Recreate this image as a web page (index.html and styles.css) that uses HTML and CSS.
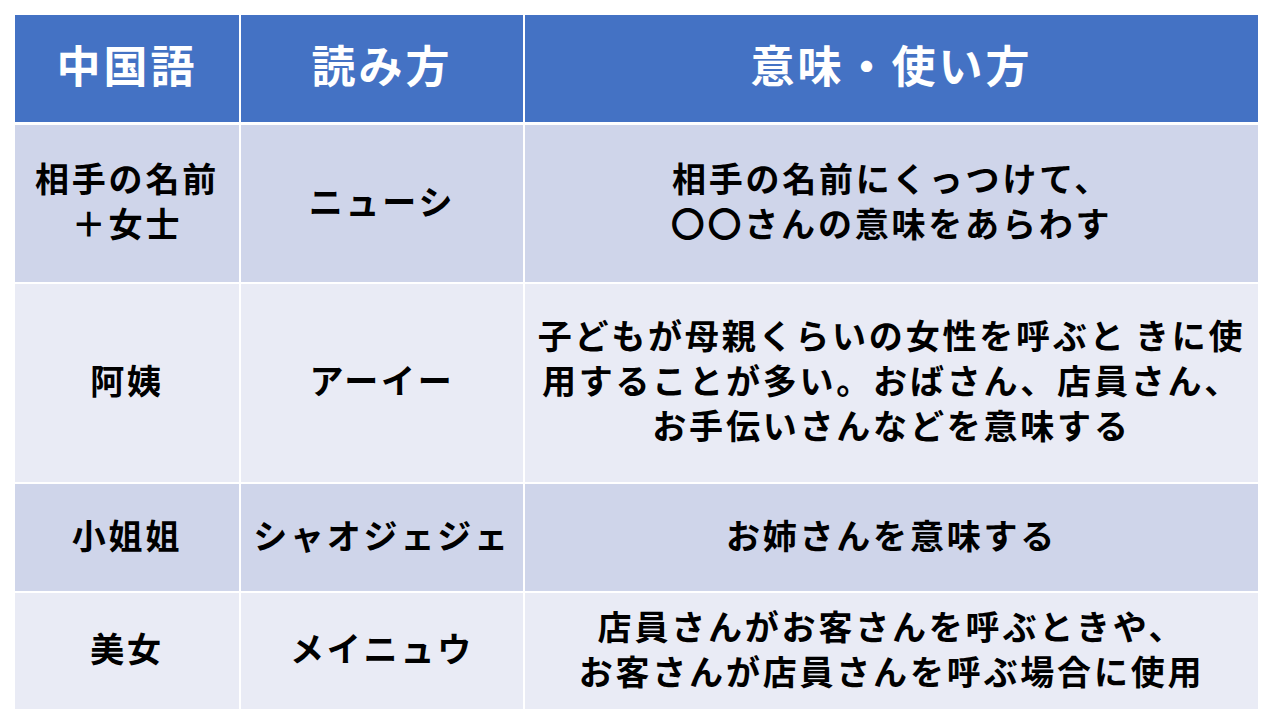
FILE: index.html
```html
<!DOCTYPE html>
<html lang="ja">
<head>
<meta charset="utf-8">
<title>中国語 呼び方</title>
<link rel="stylesheet" href="styles.css">
</head>
<body>
<div class="page">
  <div class="table">
    <div class="row head">
      <div class="cell">中国語</div>
      <div class="cell">読み方</div>
      <div class="cell">意味・使い方</div>
    </div>
    <div class="row odd r1">
      <div class="cell">相手の名前<br>＋女士</div>
      <div class="cell">ニューシ</div>
      <div class="cell">相手の名前にくっつけて、<br>〇〇さんの意味をあらわす</div>
    </div>
    <div class="row even r2">
      <div class="cell">阿姨</div>
      <div class="cell">アーイー</div>
      <div class="cell">子どもが母親くらいの女性を呼ぶと&#8198;きに使<br>用することが多い。おばさん、店員さん、<br>お手伝いさんなどを意味する</div>
    </div>
    <div class="row odd r3">
      <div class="cell">小姐姐</div>
      <div class="cell">シャオジェジェ</div>
      <div class="cell">お姉さんを意味する</div>
    </div>
    <div class="row even r4">
      <div class="cell">美女</div>
      <div class="cell">メイニュウ</div>
      <div class="cell">店員さんがお客さんを呼ぶときや、<br>お客さんが店員さんを呼ぶ場合に使用</div>
    </div>
  </div>
</div>
</body>
</html>
```

FILE: styles.css
```css
html, body {
  margin: 0;
  padding: 0;
  background: #ffffff;
}

.page {
  width: 1280px;
  height: 720px;
  padding: 15px 0 0 15px;
  box-sizing: border-box;
  font-family: "Noto Sans CJK JP", "Noto Sans", sans-serif;
}

.table {
  width: 1243px;
  display: flex;
  flex-direction: column;
  gap: 2px;
}

.row {
  display: grid;
  grid-template-columns: 224px 282px 733px;
  column-gap: 2px;
}

.cell {
  display: flex;
  align-items: center;
  justify-content: center;
  text-align: center;
  white-space: nowrap;
  font-weight: 700;
  font-size: 34px;
  letter-spacing: 2.8px;
  line-height: 45px;
  padding-bottom: 7px;
  color: #000000;
}

.head {
  height: 107px;
  margin-bottom: 1px;
}

.head .cell {
  background: #4472c4;
  color: #ffffff;
  font-size: 44px;
  letter-spacing: 3px;
  padding-bottom: 8px;
}

.odd .cell {
  background: #cfd5ea;
}

.even .cell {
  background: #e9ebf5;
}

.r1 { height: 157px; }
.r2 { height: 198px; }
.r3 { height: 107px; }
.r4 { height: 116px; }
```
